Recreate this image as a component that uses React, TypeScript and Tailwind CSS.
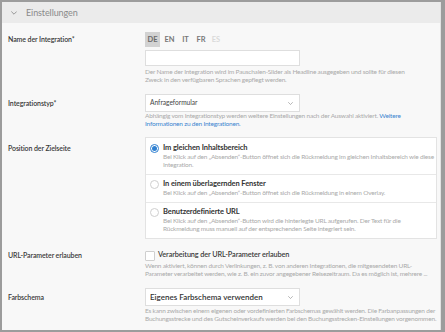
import React from "react";

const Chevron = ({ className }: { className?: string }) => (
  <svg viewBox="0 0 10 6" className={className} fill="none" stroke="currentColor" strokeWidth={1.2} strokeLinecap="round" strokeLinejoin="round">
    <path d="M1 1l4 4 4-4" />
  </svg>
);

const Label = ({ children, h }: { children: React.ReactNode; h: string }) => (
  <div className={`w-[143px] shrink-0 pl-[6px] flex items-center text-[7px] font-semibold tracking-[-0.1px] text-[#3a3a3a] ${h}`}>{children}</div>
);

const Help = ({ children, mt }: { children: React.ReactNode; mt: string }) => (
  <div className={`text-[6.5px] tracking-[-0.2px] leading-[8px] text-[#aaaaaa] whitespace-nowrap ${mt}`}>{children}</div>
);

const Radio = ({ checked }: { checked?: boolean }) => (
  <div className={`w-[9px] h-[9px] mt-[0.5px] rounded-full border shrink-0 flex items-center justify-center bg-white ${checked ? "border-[#2f80d1]" : "border-[#cfcfcf]"}`}>
    {checked && <div className="w-[5px] h-[5px] rounded-full bg-[#2f80d1]" />}
  </div>
);

const Title = ({ children }: { children: React.ReactNode }) => (
  <div className="text-[7.5px] font-bold text-[#333] leading-[10px] tracking-[-0.1px]">{children}</div>
);

export default function App() {
  return (
    <div
      className="w-[445px] h-[332px] bg-[#9c9c9c] p-[2px] overflow-hidden"
      style={{ fontFamily: '"Lato", "Noto Sans", sans-serif' }}
    >
      <div className="w-[439px] h-[328px] bg-[#f8f8f8] flex flex-col border-r border-[#e2e2e2]">
        <div className="h-[21px] bg-[#ebebeb] flex items-center pl-[9px] shrink-0">
          <Chevron className="w-[6px] h-[4px] text-[#777]" />
          <span className="ml-[9px] text-[9px] tracking-[-0.1px] text-[#8a8a8a]">Einstellungen</span>
        </div>
        <div className="pt-[9px] flex flex-col">
          {/* Name */}
          <div className="flex">
            <Label h="h-[15px]">Name der Integration*</Label>
            <div className="flex-1 flex flex-col">
              <div className="flex items-center h-[15px] text-[7.5px] font-bold">
                <div className="w-[15px] h-[15px] bg-[#d2d2d2] text-[#6a6a6a] flex items-center justify-center">DE</div>
                <div className="w-[19px] text-center text-[#777]">EN</div>
                <div className="w-[13px] text-center text-[#777]">IT</div>
                <div className="w-[18px] text-center text-[#777]">FR</div>
                <div className="w-[12px] text-center text-[#dadada]">ES</div>
              </div>
              <div className="w-[155px] h-[16px] bg-white border border-[#dedede] mt-[3px]" />
              <Help mt="mt-[2px]">
                Der Name der Integration wird im Pauschalen-Slider als Headline ausgegeben und sollte für diesen
                <br />
                Zweck in den verfügbaren Sprachen gepflegt werden.
              </Help>
            </div>
          </div>

          {/* Integrationstyp */}
          <div className="flex mt-[10px]">
            <Label h="h-[18px]">Integrationstyp*</Label>
            <div className="flex-1 flex flex-col">
              <div className="w-[155px] h-[18px] bg-white border border-[#dedede] flex items-center justify-between pl-[4px] pr-[6px]">
                <span className="text-[6.6px] text-[#444]">Anfrageformular</span>
                <Chevron className="w-[5px] h-[3px] text-[#888]" />
              </div>
              <Help mt="mt-[0px]">
                Abhängig vom Integrationstyp werden weitere Einstellungen nach der Auswahl aktiviert.{" "}
                <span className="text-[#3d86d0]">Weitere</span>
                <br />
                <span className="text-[#3d86d0]">Informationen zu den Integrationen.</span>
              </Help>
            </div>
          </div>

          {/* Position */}
          <div className="flex mt-[9px]">
            <Label h="h-[22px]">Position der Zielseite</Label>
            <div className="w-[292px] bg-white border border-[#e3e3e3] flex flex-col">
              <div className="flex pl-[4px] pt-[5px] pb-[5px] border-b border-[#e8e8e8]">
                <Radio checked />
                <div className="ml-[4px]">
                  <Title>Im gleichen Inhaltsbereich</Title>
                  <Help mt="mt-[0px]">
                    Bei Klick auf den „Absenden“-Button öffnet sich die Rückmeldung im gleichen Inhaltsbereich wie diese
                    <br />
                    Integration.
                  </Help>
                </div>
              </div>
              <div className="flex pl-[4px] pt-[4px] pb-[5px] border-b border-[#e8e8e8]">
                <Radio />
                <div className="ml-[4px]">
                  <Title>In einem überlagernden Fenster</Title>
                  <Help mt="mt-[0px]">Bei Klick auf den „Absenden“-Button öffnet sich die Rückmeldung in einem Overlay.</Help>
                </div>
              </div>
              <div className="flex pl-[4px] pt-[4px] pb-[5px]">
                <Radio />
                <div className="ml-[4px]">
                  <Title>Benutzerdefinierte URL</Title>
                  <Help mt="mt-[0px]">
                    Bei Klick auf den „Absenden“-Button wird die hinterlegte URL aufgerufen. Der Text für die
                    <br />
                    Rückmeldung muss manuell auf der entsprechenden Seite integriert sein.
                  </Help>
                </div>
              </div>
            </div>
          </div>

          {/* URL-Parameter */}
          <div className="flex mt-[11px]">
            <Label h="h-[11px]">URL-Parameter erlauben</Label>
            <div className="flex-1 flex flex-col">
              <div className="flex items-center h-[11px]">
                <div className="w-[10px] h-[10px] bg-white border border-[#cfcfcf] rounded-[1px]" />
                <span className="ml-[3px] text-[7.3px] font-semibold tracking-[-0.1px] text-[#3a3a3a]">Verarbeitung der URL-Parameter erlauben</span>
              </div>
              <Help mt="mt-[1px]">
                Wenn aktiviert, können durch Verlinkungen, z. B. von anderen Integrationen, die mitgesendeten URL-
                <br />
                Parameter verarbeitet werden, wie z. B. ein zuvor angegebener Reisezeitraum. Da es möglich ist, mehrere ...
              </Help>
            </div>
          </div>

          {/* Farbschema */}
          <div className="flex mt-[10px]">
            <Label h="h-[18px]">Farbschema</Label>
            <div className="flex-1 flex flex-col">
              <div className="w-[155px] h-[18px] bg-white border border-[#dedede] flex items-center justify-between pl-[4px] pr-[6px]">
                <span className="text-[8px] font-semibold text-[#333]">Eigenes Farbschema verwenden</span>
                <Chevron className="w-[5px] h-[3px] text-[#888]" />
              </div>
              <Help mt="mt-[1px]">
                Es kann zwischen einem eigenen oder vordefinierten Farbschemas gewählt werden. Die Farbanpassungen der
                <br />
                Buchungsstrecke und des Gutscheinverkaufs werden bei den Buchungsstrecken-Einstellungen vorgenommen.
              </Help>
            </div>
          </div>
        </div>
      </div>
    </div>
  );
}
